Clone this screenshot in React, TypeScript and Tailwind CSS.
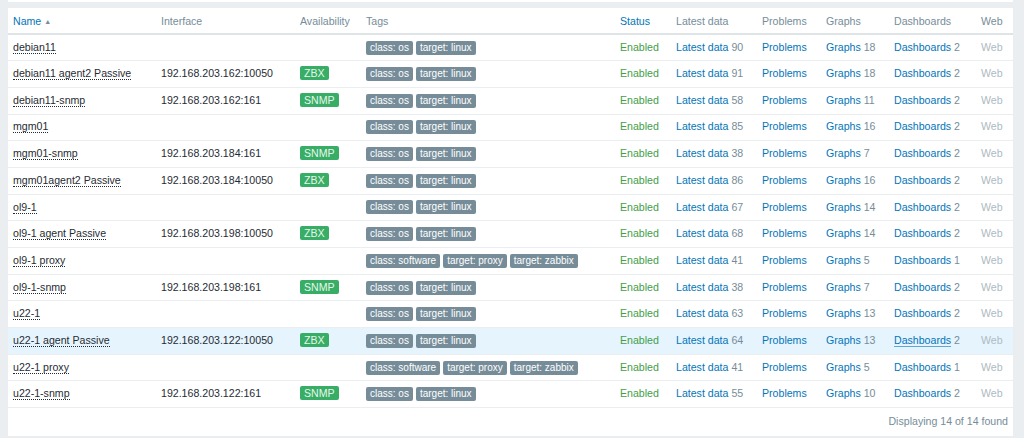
import React from 'react';

type Host = {
  name: string;
  iface?: string;
  avail?: 'ZBX' | 'SNMP';
  tags: string[];
  latest: number;
  graphs: number;
  dashboards: number;
  hover?: boolean;
};

const OS = ['class: os', 'target: linux'];
const PROXY = ['class: software', 'target: proxy', 'target: zabbix'];

const HOSTS: Host[] = [
  { name: 'debian11', tags: OS, latest: 90, graphs: 18, dashboards: 2 },
  { name: 'debian11 agent2 Passive', iface: '192.168.203.162:10050', avail: 'ZBX', tags: OS, latest: 91, graphs: 18, dashboards: 2 },
  { name: 'debian11-snmp', iface: '192.168.203.162:161', avail: 'SNMP', tags: OS, latest: 58, graphs: 11, dashboards: 2 },
  { name: 'mgm01', tags: OS, latest: 85, graphs: 16, dashboards: 2 },
  { name: 'mgm01-snmp', iface: '192.168.203.184:161', avail: 'SNMP', tags: OS, latest: 38, graphs: 7, dashboards: 2 },
  { name: 'mgm01agent2 Passive', iface: '192.168.203.184:10050', avail: 'ZBX', tags: OS, latest: 86, graphs: 16, dashboards: 2 },
  { name: 'ol9-1', tags: OS, latest: 67, graphs: 14, dashboards: 2 },
  { name: 'ol9-1 agent Passive', iface: '192.168.203.198:10050', avail: 'ZBX', tags: OS, latest: 68, graphs: 14, dashboards: 2 },
  { name: 'ol9-1 proxy', tags: PROXY, latest: 41, graphs: 5, dashboards: 1 },
  { name: 'ol9-1-snmp', iface: '192.168.203.198:161', avail: 'SNMP', tags: OS, latest: 38, graphs: 7, dashboards: 2 },
  { name: 'u22-1', tags: OS, latest: 63, graphs: 13, dashboards: 2 },
  { name: 'u22-1 agent Passive', iface: '192.168.203.122:10050', avail: 'ZBX', tags: OS, latest: 64, graphs: 13, dashboards: 2, hover: true },
  { name: 'u22-1 proxy', tags: PROXY, latest: 41, graphs: 5, dashboards: 1 },
  { name: 'u22-1-snmp', iface: '192.168.203.122:161', avail: 'SNMP', tags: OS, latest: 55, graphs: 10, dashboards: 2 },
];

export default function App() {
  return (
    <div
      className="w-[1024px] h-[438px] bg-[#ebeef0] overflow-hidden text-[10.6px] text-[#1f2c33]"
      style={{ fontFamily: '"Liberation Sans", Arial, sans-serif' }}
    >
      {/* bottom edge of the filter panel above */}
      <div className="ml-[8px] w-[1005px] h-[2px] bg-white" />
      <div className="ml-[8px] w-[1005px] mt-[6px] bg-white h-[428px] flex flex-col">
        <table className="table-fixed w-full border-collapse">
          <colgroup>
            <col className="w-[148px]" />
            <col className="w-[139px]" />
            <col className="w-[66px]" />
            <col className="w-[254px]" />
            <col className="w-[56px]" />
            <col className="w-[86px]" />
            <col className="w-[64px]" />
            <col className="w-[68px]" />
            <col className="w-[87px]" />
            <col className="w-[37px]" />
          </colgroup>
          <thead>
            <tr className="h-[26px] border-b-2 border-[#dfe4e7] text-left text-[#768d99]">
              <th className="font-normal px-[5px] pt-[2px] text-[#0275b8]">
                Name <span className="text-[7px] text-[#768d99] relative -top-px">▲</span>
              </th>
              <th className="font-normal px-[5px] pt-[2px]">Interface</th>
              <th className="font-normal px-[5px] pt-[2px]">Availability</th>
              <th className="font-normal px-[5px] pt-[2px]">Tags</th>
              <th className="font-normal px-[5px] pt-[2px] text-[#0275b8]">Status</th>
              <th className="font-normal px-[5px] pt-[2px]">Latest data</th>
              <th className="font-normal px-[5px] pt-[2px]">Problems</th>
              <th className="font-normal px-[5px] pt-[2px]">Graphs</th>
              <th className="font-normal px-[5px] pt-[2px]">Dashboards</th>
              <th className="font-normal px-[5px] pt-[2px]">Web</th>
            </tr>
          </thead>
          <tbody>
            {HOSTS.map((h) => (
              <tr
                key={h.name}
                className={`h-[26.7px] border-b border-[#ebeef0] ${h.hover ? 'bg-[#e6f4fe]' : ''}`}
              >
                <td className="px-[5px] whitespace-nowrap">
                  <span className="border-b border-dotted border-[#1f2c33]">{h.name}</span>
                </td>
                <td className="px-[5px] whitespace-nowrap">{h.iface}</td>
                <td className="px-[5px]">
                  {h.avail && (
                    <span className="inline-block bg-[#38ad65] text-[#e6f7ec] rounded-[2px] px-[4px] leading-[14px]">
                      {h.avail}
                    </span>
                  )}
                </td>
                <td className="px-[5px] whitespace-nowrap">
                  <div className="flex gap-[3px]">
                    {h.tags.map((t) => (
                      <span
                        key={t}
                        className="bg-[#768d99] text-white text-[10px] rounded-[2px] px-[4px] leading-[14px]"
                      >
                        {t}
                      </span>
                    ))}
                  </div>
                </td>
                <td className="px-[5px] text-[#429e47]">Enabled</td>
                <td className="px-[5px] whitespace-nowrap">
                  <span className="text-[#0275b8]">Latest data</span>{' '}
                  <span className="text-[#768d99]">{h.latest}</span>
                </td>
                <td className="px-[5px] text-[#0275b8]">Problems</td>
                <td className="px-[5px] whitespace-nowrap">
                  <span className="text-[#0275b8]">Graphs</span>{' '}
                  <span className="text-[#768d99]">{h.graphs}</span>
                </td>
                <td className="px-[5px] whitespace-nowrap">
                  <span
                    className={`text-[#0275b8] ${h.hover ? 'border-b border-[#0275b8]/60' : ''}`}
                  >
                    Dashboards
                  </span>{' '}
                  <span className="text-[#768d99]">{h.dashboards}</span>
                </td>
                <td className="px-[5px] text-[#acbbc2]">Web</td>
              </tr>
            ))}
          </tbody>
        </table>
        <div className="flex-1 flex items-center justify-end px-[5px] text-[#768d99]">
          Displaying 14 of 14 found
        </div>
      </div>
    </div>
  );
}
